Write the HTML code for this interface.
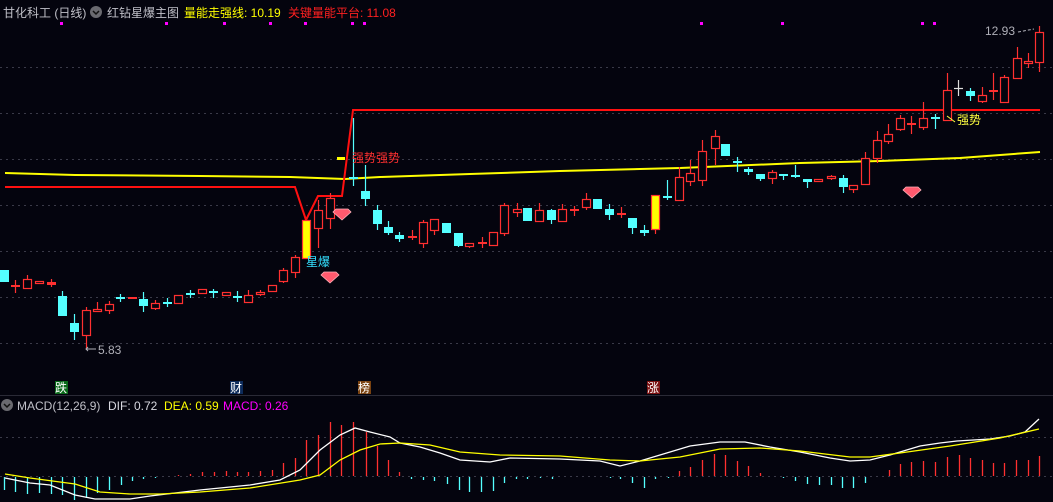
<!DOCTYPE html>
<html><head><meta charset="utf-8"><style>
html,body{margin:0;padding:0;background:#04040e;}
svg{display:block}
text{font-family:"Liberation Sans","Noto Sans CJK SC",sans-serif;}
</style></head><body>
<svg width="1053" height="502" viewBox="0 0 1053 502" xmlns="http://www.w3.org/2000/svg">
<rect width="1053" height="502" fill="#04040e"/>
<g stroke="#3a3a48" stroke-dasharray="2,4" stroke-width="1">
<line x1="0" y1="67.5" x2="1053" y2="67.5"/><line x1="0" y1="113.5" x2="1053" y2="113.5"/><line x1="0" y1="159.5" x2="1053" y2="159.5"/><line x1="0" y1="205.5" x2="1053" y2="205.5"/><line x1="0" y1="251.5" x2="1053" y2="251.5"/><line x1="0" y1="297.5" x2="1053" y2="297.5"/><line x1="0" y1="343.5" x2="1053" y2="343.5"/>
<line x1="0" y1="437.5" x2="1053" y2="437.5"/><line x1="0" y1="476.5" x2="1053" y2="476.5"/>
</g>
<line x1="0" y1="395.5" x2="1053" y2="395.5" stroke="#2a2a36"/>
<text x="3" y="17" font-size="12" fill="#c0c0c8">甘化科工 (日线)</text>
<circle cx="96" cy="12" r="6" fill="#6a6a70"/><path d="M93 11l3 3 3-3" stroke="#111" stroke-width="1.5" fill="none"/>
<text x="107" y="17" font-size="12" fill="#c0c0c8">红钻星爆主图</text>
<text x="184" y="17" font-size="12" fill="#ffff00">量能走强线: 10.19</text>
<text x="288" y="17" font-size="12" fill="#ff2020">关键量能平台: 11.08</text>
<g fill="#ff00ff">
<rect x="60" y="22" width="3" height="3"/><rect x="165" y="22" width="3" height="3"/><rect x="223" y="22" width="3" height="3"/><rect x="269" y="22" width="3" height="3"/><rect x="304" y="22" width="3" height="3"/><rect x="351" y="22" width="3" height="3"/><rect x="363" y="22" width="3" height="3"/><rect x="700" y="22" width="3" height="3"/><rect x="781" y="22" width="3" height="3"/><rect x="921" y="22" width="3" height="3"/><rect x="933" y="22" width="3" height="3"/>
</g>
<polyline fill="none" stroke="#ffff00" stroke-width="2" points="5,173 75,175 200,176 290,177 345,179 380,177 470,174 560,171 680,168 800,163 880,161 960,158 1040,152"/>
<polyline fill="none" stroke="#ff1010" stroke-width="2" points="5,187 295,187 306,220 318,196 342,196 353,110 1040,110"/>
<g stroke-width="1.2">
<g stroke="#ff3030">
<line x1="15.5" y1="280" x2="15.5" y2="293"/><line x1="27.5" y1="275" x2="27.5" y2="288"/><line x1="51.5" y1="279" x2="51.5" y2="287"/><line x1="86.5" y1="307" x2="86.5" y2="350"/><line x1="97.5" y1="302" x2="97.5" y2="311"/><line x1="109.5" y1="301" x2="109.5" y2="314"/><line x1="155.5" y1="300" x2="155.5" y2="310"/><line x1="248.5" y1="290" x2="248.5" y2="302"/><line x1="260.5" y1="290" x2="260.5" y2="296"/><line x1="283.5" y1="268" x2="283.5" y2="283"/><line x1="295.5" y1="255" x2="295.5" y2="278"/><line x1="318.5" y1="200" x2="318.5" y2="248"/><line x1="330.5" y1="193" x2="330.5" y2="229"/><line x1="412.5" y1="230" x2="412.5" y2="240"/><line x1="423.5" y1="220" x2="423.5" y2="248"/><line x1="434.5" y1="219" x2="434.5" y2="235"/><line x1="469.5" y1="243" x2="469.5" y2="248"/><line x1="482.5" y1="237" x2="482.5" y2="248"/><line x1="504.5" y1="203" x2="504.5" y2="236"/><line x1="517.5" y1="203" x2="517.5" y2="217"/><line x1="539.5" y1="203" x2="539.5" y2="221"/><line x1="562.5" y1="204" x2="562.5" y2="222"/><line x1="574.5" y1="206" x2="574.5" y2="216"/><line x1="586.5" y1="193" x2="586.5" y2="210"/><line x1="621.5" y1="207" x2="621.5" y2="218"/><line x1="655.5" y1="229" x2="655.5" y2="234"/><line x1="679.5" y1="167" x2="679.5" y2="200"/><line x1="690.5" y1="160" x2="690.5" y2="186"/><line x1="702.5" y1="140" x2="702.5" y2="186"/><line x1="715.5" y1="130" x2="715.5" y2="165"/><line x1="772.5" y1="170" x2="772.5" y2="184"/><line x1="831.5" y1="175" x2="831.5" y2="180"/><line x1="853.5" y1="185" x2="853.5" y2="193"/><line x1="865.5" y1="152" x2="865.5" y2="184"/><line x1="877.5" y1="131" x2="877.5" y2="163"/><line x1="888.5" y1="124" x2="888.5" y2="144"/><line x1="900.5" y1="115" x2="900.5" y2="131"/><line x1="911.5" y1="116" x2="911.5" y2="134"/><line x1="923.5" y1="102" x2="923.5" y2="130"/><line x1="947.5" y1="73" x2="947.5" y2="120"/><line x1="982.5" y1="87" x2="982.5" y2="103"/><line x1="993.5" y1="73" x2="993.5" y2="100"/><line x1="1004.5" y1="75" x2="1004.5" y2="102"/><line x1="1017.5" y1="47" x2="1017.5" y2="78"/><line x1="1028.5" y1="53" x2="1028.5" y2="68"/><line x1="1039.5" y1="26" x2="1039.5" y2="72"/>
</g>
<g stroke="#54ffff">
<line x1="62.5" y1="291" x2="62.5" y2="316"/><line x1="74.5" y1="314" x2="74.5" y2="340"/><line x1="120.5" y1="294" x2="120.5" y2="302"/><line x1="143.5" y1="292" x2="143.5" y2="312"/><line x1="167.5" y1="298" x2="167.5" y2="307"/><line x1="190.5" y1="290" x2="190.5" y2="298"/><line x1="213.5" y1="289" x2="213.5" y2="298"/><line x1="237.5" y1="291" x2="237.5" y2="302"/><line x1="353.5" y1="118" x2="353.5" y2="186"/><line x1="365.5" y1="165" x2="365.5" y2="206"/><line x1="377.5" y1="205" x2="377.5" y2="230"/><line x1="388.5" y1="221" x2="388.5" y2="235"/><line x1="399.5" y1="232" x2="399.5" y2="242"/><line x1="458.5" y1="233" x2="458.5" y2="247"/><line x1="551.5" y1="209" x2="551.5" y2="224"/><line x1="609.5" y1="204" x2="609.5" y2="220"/><line x1="632.5" y1="218" x2="632.5" y2="234"/><line x1="644.5" y1="225" x2="644.5" y2="236"/><line x1="667.5" y1="180" x2="667.5" y2="200"/><line x1="737.5" y1="157" x2="737.5" y2="172"/><line x1="748.5" y1="167" x2="748.5" y2="175"/><line x1="760.5" y1="174" x2="760.5" y2="181"/><line x1="783.5" y1="174" x2="783.5" y2="180"/><line x1="795.5" y1="165" x2="795.5" y2="178"/><line x1="807.5" y1="179" x2="807.5" y2="188"/><line x1="843.5" y1="175" x2="843.5" y2="193"/><line x1="935.5" y1="114" x2="935.5" y2="129"/><line x1="970.5" y1="88" x2="970.5" y2="101"/>
</g>
<line x1="958.5" y1="80" x2="958.5" y2="96" stroke="#ddd"/><line x1="954" y1="88.5" x2="963" y2="88.5" stroke="#ddd"/>
<g stroke="#ff3030" fill="#04040e">
<rect x="23.5" y="279.5" width="8" height="9"/><rect x="35.5" y="281.5" width="8" height="2"/><rect x="82.5" y="310.5" width="8" height="25"/><rect x="93.5" y="309.5" width="8" height="2"/><rect x="105.5" y="304.5" width="8" height="6"/><rect x="151.5" y="303.5" width="8" height="5"/><rect x="174.5" y="295.5" width="8" height="8"/><rect x="198.5" y="289.5" width="8" height="4"/><rect x="222.5" y="292.5" width="8" height="3"/><rect x="244.5" y="295.5" width="8" height="7"/><rect x="256.5" y="292.5" width="8" height="2"/><rect x="268.5" y="285.5" width="8" height="6"/><rect x="279.5" y="270.5" width="8" height="11"/><rect x="291.5" y="257.5" width="8" height="15"/><rect x="314.5" y="210.5" width="8" height="18"/><rect x="326.5" y="198.5" width="8" height="20"/><rect x="419.5" y="222.5" width="8" height="21"/><rect x="430.5" y="219.5" width="8" height="11"/><rect x="465.5" y="243.5" width="8" height="3"/><rect x="489.5" y="232.5" width="8" height="13"/><rect x="500.5" y="205.5" width="8" height="28"/><rect x="513.5" y="209.5" width="8" height="3"/><rect x="535.5" y="210.5" width="8" height="11"/><rect x="558.5" y="209.5" width="8" height="12"/><rect x="582.5" y="199.5" width="8" height="8"/><rect x="675.5" y="177.5" width="8" height="23"/><rect x="686.5" y="173.5" width="8" height="8"/><rect x="698.5" y="151.5" width="8" height="29"/><rect x="711.5" y="136.5" width="8" height="12"/><rect x="768.5" y="172.5" width="8" height="6"/><rect x="814.5" y="179.5" width="8" height="2"/><rect x="827.5" y="176.5" width="8" height="2"/><rect x="849.5" y="185.5" width="8" height="4"/><rect x="861.5" y="158.5" width="8" height="26"/><rect x="873.5" y="140.5" width="8" height="18"/><rect x="884.5" y="134.5" width="8" height="7"/><rect x="896.5" y="118.5" width="8" height="11"/><rect x="919.5" y="118.5" width="8" height="9"/><rect x="943.5" y="90.5" width="8" height="30"/><rect x="978.5" y="95.5" width="8" height="6"/><rect x="1000.5" y="77.5" width="8" height="25"/><rect x="1013.5" y="58.5" width="8" height="20"/><rect x="1024.5" y="61.5" width="8" height="2"/><rect x="1035.5" y="32.5" width="8" height="30"/>
</g>
<g fill="#ff3030">
<rect x="11" y="285" width="9" height="2"/><rect x="47" y="282" width="9" height="3"/><rect x="128" y="297" width="9" height="2"/><rect x="408" y="236" width="9" height="2"/><rect x="478" y="242" width="9" height="2"/><rect x="570" y="209" width="9" height="2"/><rect x="617" y="213" width="9" height="2"/><rect x="907" y="123" width="9" height="2"/><rect x="989" y="90" width="9" height="2"/>
</g>
<g fill="#54ffff">
<rect x="0" y="270" width="9" height="12"/><rect x="58" y="296" width="9" height="20"/><rect x="70" y="323" width="9" height="9"/><rect x="116" y="297" width="9" height="2"/><rect x="139" y="299" width="9" height="7"/><rect x="163" y="302" width="9" height="2"/><rect x="186" y="293" width="9" height="2"/><rect x="209" y="291" width="9" height="2"/><rect x="233" y="296" width="9" height="2"/><rect x="349" y="177" width="9" height="2"/><rect x="361" y="191" width="9" height="8"/><rect x="373" y="210" width="9" height="14"/><rect x="384" y="227" width="9" height="6"/><rect x="395" y="235" width="9" height="4"/><rect x="442" y="223" width="9" height="10"/><rect x="454" y="233" width="9" height="13"/><rect x="523" y="208" width="9" height="13"/><rect x="547" y="210" width="9" height="10"/><rect x="593" y="199" width="9" height="10"/><rect x="605" y="209" width="9" height="6"/><rect x="628" y="218" width="9" height="10"/><rect x="640" y="230" width="9" height="3"/><rect x="663" y="196" width="9" height="2"/><rect x="721" y="144" width="9" height="12"/><rect x="733" y="161" width="9" height="2"/><rect x="744" y="169" width="9" height="3"/><rect x="756" y="174" width="9" height="5"/><rect x="779" y="174" width="9" height="2"/><rect x="791" y="175" width="9" height="2"/><rect x="803" y="179" width="9" height="3"/><rect x="839" y="178" width="9" height="9"/><rect x="931" y="117" width="9" height="2"/><rect x="966" y="91" width="9" height="5"/>
</g>
<rect x="302.5" y="220.5" width="8" height="38" fill="#ffff00" stroke="#ff3030"/>
<rect x="651.5" y="195.5" width="8" height="34" fill="#ffff00" stroke="#ff3030"/>
</g>
<g fill="#ff5a6e" stroke="#ffb0b8" stroke-width="0.8">
<path d="M324 272h12l3 3-9 8-9-8z"/><path d="M336 209h12l3 3-9 8-9-8z"/><path d="M906 187h12l3 3-9 8-9-8z"/>
</g>
<text x="306" y="266" font-size="12" fill="#33e0ff">星爆</text>
<rect x="337" y="157" width="8" height="3" fill="#ffff00"/>
<text x="352" y="162" font-size="12" fill="#ff3030">强势强势</text>
<text x="957" y="124" font-size="12" fill="#ffff40">强势</text>
<path d="M947 116l8 6" stroke="#ffff40"/>
<text x="985" y="35" font-size="12" fill="#b0b0b8">12.93</text>
<path d="M1018 32l16-3" stroke="#b0b0b8" stroke-dasharray="3,2"/>
<path d="M86 349h10" stroke="#b0b0b8"/><path d="M88 347l-2 2 2 2" stroke="#b0b0b8" fill="none"/>
<text x="98" y="354" font-size="12" fill="#b0b0b8">5.83</text>
<rect x="55" y="381" width="13" height="13" fill="#0a6a1a"/><text x="55" y="392" font-size="12" fill="#fff">跌</text>
<rect x="230" y="381" width="13" height="13" fill="#0c2a5a"/><text x="230" y="392" font-size="12" fill="#fff">财</text>
<rect x="358" y="381" width="13" height="13" fill="#7a4210"/><text x="358" y="392" font-size="12" fill="#fff">榜</text>
<rect x="647" y="381" width="13" height="13" fill="#7a1010"/><text x="647" y="392" font-size="12" fill="#fff">涨</text>
<circle cx="7" cy="405" r="6" fill="#6a6a70"/><path d="M4 404l3 3 3-3" stroke="#111" stroke-width="1.5" fill="none"/>
<text x="17" y="410" font-size="12" fill="#c0c0c8">MACD(12,26,9)</text>
<text x="108" y="410" font-size="12" fill="#d8d8e0">DIF: 0.72</text>
<text x="164" y="410" font-size="12" fill="#ffff00">DEA: 0.59</text>
<text x="223" y="410" font-size="12" fill="#ff00ff">MACD: 0.26</text>
<g stroke="#ff3030" stroke-width="1.3">
<path d="M178.5 476V475M190.5 476V474M202.5 476V472M214.5 476V472M226.5 476V471M237.5 476V472M248.5 476V472M260.5 476V471M272.5 476V470M283.5 476V463M295.5 476V458M306.5 476V440M318.5 476V435M330.5 476V422M341.5 476V425M353.5 476V422M366.5 476V432M377.5 476V446M388.5 476V460M399.5 476V472M679.5 476V471M690.5 476V467M702.5 476V460M714.5 476V454M725.5 476V455M737.5 476V461M748.5 476V466M760.5 476V473M889.5 476V470M900.5 476V464M911.5 476V462M923.5 476V461M935.5 476V462M947.5 476V457M959.5 476V455M970.5 476V458M982.5 476V460M993.5 476V463M1004.5 476V463M1016.5 476V460M1028.5 476V460M1039.5 476V456"/>
</g>
<g stroke="#54ffff" stroke-width="1.3">
<path d="M4.5 477V490M15.5 477V492M27.5 477V494M39.5 477V493M51.5 477V494M62.5 477V495M74.5 477V500M86.5 477V498M97.5 477V493M109.5 477V490M121.5 477V485M132.5 477V481M143.5 477V479M155.5 477V478M411.5 477V479M423.5 477V480M434.5 477V481M447.5 477V484M459.5 477V490M469.5 477V492M481.5 477V492M493.5 477V491M504.5 477V483M516.5 477V479M527.5 477V479M540.5 477V478M552.5 477V479M610.5 477V478M620.5 477V479M632.5 477V483M644.5 477V488M655.5 477V479M668.5 477V478M783.5 477V478M795.5 477V481M807.5 477V484M819.5 477V485M831.5 477V485M842.5 477V488M853.5 477V488M865.5 477V483"/>
</g>
<polyline fill="none" stroke="#ffffff" stroke-width="1.3" points="5,478 30,483 50,485 75,495 95,499 130,499 150,496 200,490 250,485 280,480 300,470 320,450 340,435 355,428 370,432 390,437 400,443 420,447 440,453 460,460 490,462 510,458 560,459 600,461 620,466 640,461 660,455 690,446 720,442 745,442 770,447 800,452 830,458 850,461 870,460 890,455 920,446 940,443 957,441 990,439 1010,436 1025,432 1039,419"/>
<polyline fill="none" stroke="#ffff00" stroke-width="1.3" points="5,474 30,478 60,482 75,484 100,492 130,494 160,494 200,492 250,488 300,480 320,475 340,460 360,450 380,444 400,443 430,445 460,452 500,455 560,456 610,460 640,461 680,457 720,449 760,448 800,451 850,457 870,457 900,453 950,446 1000,438 1039,429"/>
</svg>
</body></html>
